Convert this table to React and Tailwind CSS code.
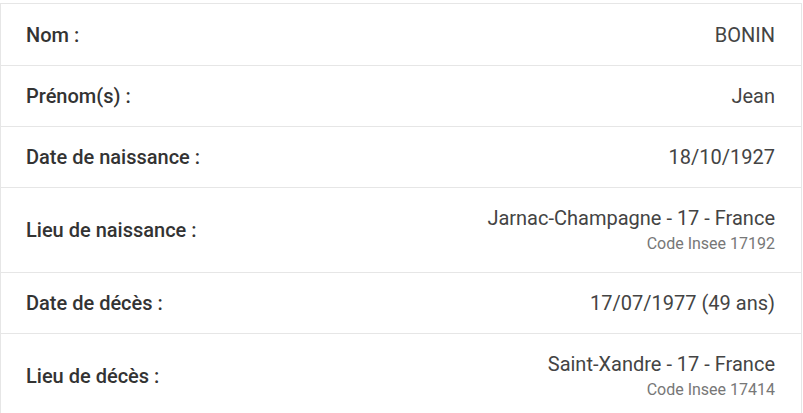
import React from "react";

const rows = [
  { label: "Nom :", value: "BONIN" },
  { label: "Prénom(s) :", value: "Jean" },
  { label: "Date de naissance :", value: "18/10/1927" },
  { label: "Lieu de naissance :", value: "Jarnac-Champagne - 17 - France", sub: "Code Insee 17192" },
  { label: "Date de décès :", value: "17/07/1977 (49 ans)" },
  { label: "Lieu de décès :", value: "Saint-Xandre - 17 - France", sub: "Code Insee 17414" },
];

export default function App() {
  return (
    <div className="min-h-screen bg-white pt-[3px] font-['Roboto',sans-serif]">
      <div className="w-[802px] border border-[#e6e6e6] bg-white">
        {rows.map((row, i) => (
          <div
            key={i}
            className="flex items-center justify-between border-b border-[#e6e6e6] py-4 pl-6 pr-[26px] first:pt-[17px] last:border-b-0"
          >
            <div className="pl-px text-[20px] font-medium leading-[28px] text-[#333333]">
              {row.label}
            </div>
            <div className="text-right">
              <div className="text-[20px] leading-[28px] text-[#444444]">{row.value}</div>
              {row.sub && (
                <div className="text-[16px] leading-[24px] text-[#777777]">{row.sub}</div>
              )}
            </div>
          </div>
        ))}
      </div>
    </div>
  );
}
